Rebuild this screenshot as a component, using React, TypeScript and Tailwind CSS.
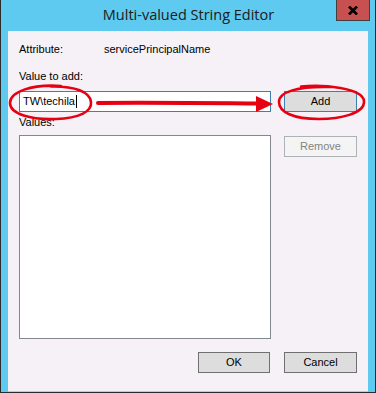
import React from "react";

const sans = { fontFamily: '"Liberation Sans", Arial, sans-serif' };

export default function App() {
  return (
    <div className="relative w-[376px] h-[393px] bg-[#5fcaf0] border-x border-b border-[#2b2b2b] flex flex-col overflow-hidden">
      {/* Title bar */}
      <div className="relative h-[31px] flex items-center justify-center shrink-0">
        <span
          className="text-[14.5px] text-[#1b1b1b] leading-none pl-[1px]"
          style={{ fontFamily: '"Segoe UI", "Open Sans", "Noto Sans", sans-serif' }}
        >
          Multi-valued String Editor
        </span>
        <div className="absolute right-[5px] top-0 w-[34px] h-[21px] bg-[#c75050] border border-t-0 border-[#3f3f3f] flex items-center justify-center">
          <svg width="10" height="9" viewBox="0 0 10 9">
            <path d="M1 0.5 L9 8.5 M9 0.5 L1 8.5" stroke="#000" strokeWidth="2.6" strokeLinecap="butt" />
          </svg>
        </div>
      </div>

      {/* Client area */}
      <div
        className="mx-[7px] flex-1 bg-[#f5f1f6] border-b border-[#cfc4d6] pt-[12px] px-[11px] flex flex-col text-[11px] leading-[13px] text-black"
        style={sans}
      >
        <div className="flex h-[13px]">
          <span className="w-[85px]">Attribute:</span>
          <span>servicePrincipalName</span>
        </div>

        <div className="mt-[14px] h-[13px]">Value to add:</div>

        <div className="mt-[8px] flex items-start">
          <div className="w-[252px] h-[21px] bg-white border border-[#3c7fb1] flex items-center pl-[3px]">
            <span>TW\techila</span>
            <span className="w-px h-[13px] bg-black ml-[1px]" />
          </div>
          <button className="ml-[13px] w-[73px] h-[21px] bg-[#dddddd] border border-[#3c7fb1] flex items-center justify-center">
            Add
          </button>
        </div>

        <div className="mt-[4px] h-[13px]">Values:</div>

        <div className="mt-[6px] flex items-start">
          <div className="w-[252px] h-[204px] bg-white border border-[#828790]" />
          <button className="ml-[13px] mt-[1px] w-[73px] h-[21px] bg-[#f4f4f4] border border-[#adb2b5] text-[#838383] flex items-center justify-center">
            Remove
          </button>
        </div>

        <div className="mt-[13px] flex justify-end gap-[14px]">
          <button className="w-[72px] h-[21px] bg-[#dddddd] border border-[#707070] flex items-center justify-center">
            OK
          </button>
          <button className="w-[73px] h-[21px] bg-[#dddddd] border border-[#707070] flex items-center justify-center">
            Cancel
          </button>
        </div>
      </div>

      {/* Red annotations */}
      <svg
        className="absolute left-0 top-0 pointer-events-none"
        width="376"
        height="393"
        viewBox="0 0 376 393"
      >
        <g fill="none" stroke="#e60012" strokeLinecap="round">
          <path
            d="M60 86 C 30 84, 9 92, 9 103 C 9 114, 30 120, 55 119 C 78 118, 91 112, 90 102 C 89 92, 74 86, 50 86.5"
            strokeWidth="2.6"
          />
          <path
            d="M300 86.5 C 322 84, 362 88, 363 101 C 364 114, 338 119, 318 119 C 292 119, 278 112, 278 102 C 278 92, 296 86, 330 87"
            strokeWidth="2.6"
          />
          <path d="M97 103 C 150 102.5, 200 103, 258 103.5" strokeWidth="4" />
        </g>
        <path d="M255 96 L272 104 L255 112 Z" fill="#e60012" />
      </svg>
    </div>
  );
}
